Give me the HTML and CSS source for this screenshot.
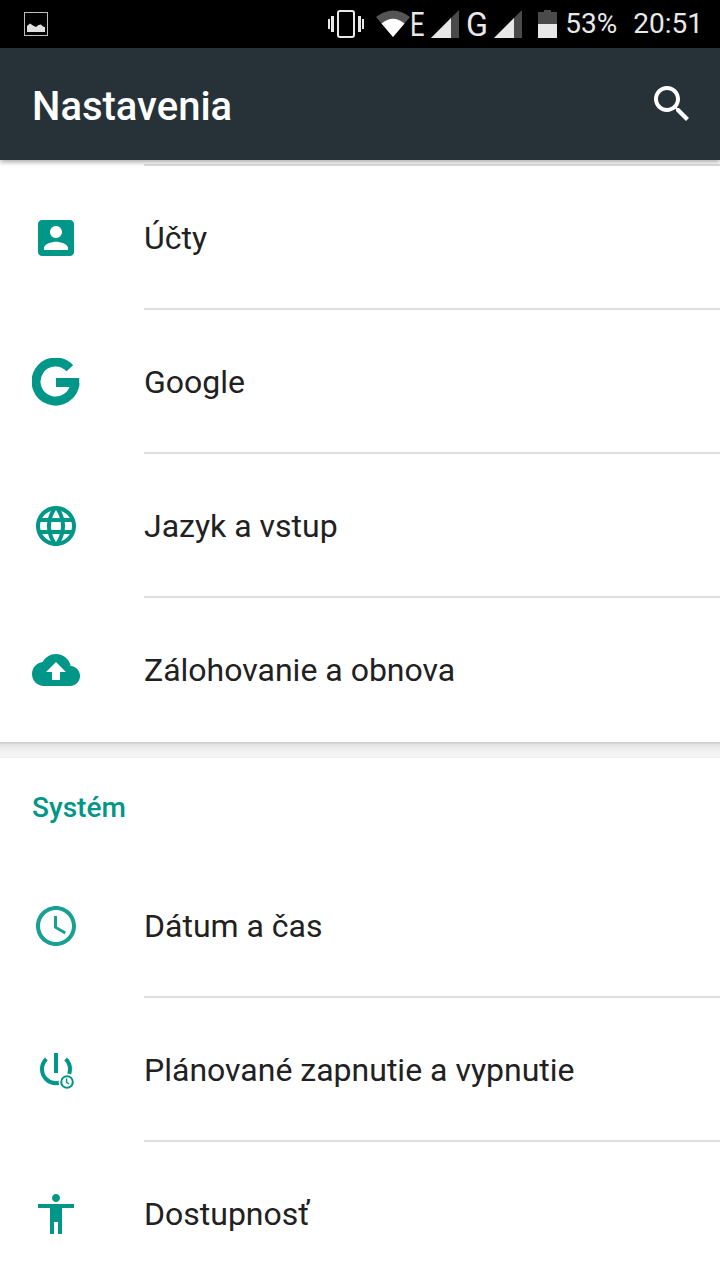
FILE: index.html
```html
<!DOCTYPE html>
<html lang="sk">
<head>
    <meta charset="UTF-8">
    <meta name="viewport" content="width=device-width, initial-scale=1.0">
    <title>Nastavenia</title>
    <link rel="stylesheet" href="styles.css">
</head>
<body>
    <div class="phone">
        <!-- Status bar -->
        <div class="status-bar">
            <svg class="status-picture" width="24" height="24" viewBox="0 0 24 24">
                <rect x="0.5" y="0.5" width="23" height="23" fill="none" stroke="#bdbdbd" stroke-width="1"/>
                <path d="M3 20V14L6 11.5L9 13.5L12 15L14.500 13L17 12.500L19 14.500L21 15V20Z" fill="#e0e0e0"/>
            </svg>
            <div class="status-right">
                <svg class="status-vibrate" width="36" height="28" viewBox="0 0 36 28">
                    <rect x="10" y="1" width="16" height="26" rx="2" fill="none" stroke="#e8e8e8" stroke-width="2"/>
                    <path d="M3 6h3v16H3zM30 6h3v16h-3zM0 9h2v10H0zM34 9h2v10h-2z" fill="#e8e8e8"/>
                </svg>
                <svg class="status-wifi" width="34" height="28" viewBox="0 0 34 28">
                    <path d="M17 27L0 7Q17 -6 34 7Z" fill="#555"/>
                    <path d="M17 27L5.500 13.500Q17 4 28.500 13.500Z" fill="#fff"/>
                </svg>
                <span class="status-letter status-letter-e">E</span>
                <svg class="status-signal" width="28" height="28" viewBox="0 0 28 28">
                    <path d="M0 28L28 0V28Z" fill="#4a4a4a"/>
                    <path d="M0 28L20 8V28Z" fill="#e8e8e8"/>
                </svg>
                <span class="status-letter status-letter-g">G</span>
                <svg class="status-signal status-signal-2" width="28" height="28" viewBox="0 0 28 28">
                    <path d="M0 28L28 0V28Z" fill="#4a4a4a"/>
                    <path d="M0 28L20 8V28Z" fill="#e8e8e8"/>
                </svg>
                <svg class="status-battery" width="19" height="28" viewBox="0 0 19 28">
                    <path d="M6 0h7v2h6v26H0V2h6z" fill="#4a4a4a"/>
                    <path d="M0 14h19v14H0z" fill="#e8e8e8"/>
                </svg>
                <span class="status-percent">53%</span>
                <span class="status-time">20:51</span>
            </div>
        </div>

        <!-- App bar -->
        <div class="app-bar">
            <h1 class="app-title">Nastavenia</h1>
            <svg class="icon" viewBox="0 0 24 24" fill="#fff">
                <path d="M15.500 14h-.79l-.28-.27C15.410 12.590 16 11.110 16 9.500 16 5.910 13.090 3 9.500 3S3 5.910 3 9.500 5.910 16 9.500 16c1.610 0 3.090-.59 4.230-1.570l.27.28v.79l5 4.990L20.490 19l-4.990-5zm-6 0C7.010 14 5 11.990 5 9.500S7.010 5 9.500 5 14 7.010 14 9.500 11.990 14 9.500 14z"/>
            </svg>
        </div>

        <div class="content">
            <div class="scrolled-edge"></div>

            <div class="settings-group">
                <div class="settings-row">
                    <svg class="icon row-icon" viewBox="0 0 24 24">
                        <path d="M3 5v14c0 1.100.89 2 2 2h14c1.100 0 2-.9 2-2V5c0-1.100-.9-2-2-2H5c-1.110 0-2 .9-2 2zm12 4c0 1.660-1.340 3-3 3s-3-1.340-3-3 1.340-3 3-3 3 1.340 3 3zm-9 8c0-2 4-3.100 6-3.100s6 1.100 6 3.100v1H6v-1z"/>
                    </svg>
                    <div class="row-label">Účty</div>
                </div>
                <div class="settings-row">
                    <svg class="icon row-icon" viewBox="0 0 24 24">
                        <path d="M18.900 5.100A9.750 9.750 0 1 0 21.500 12.500" fill="none" stroke="#009688" stroke-width="4.500"/>
                        <path d="M12 10h11.600v4.500H12z"/>
                    </svg>
                    <div class="row-label">Google</div>
                </div>
                <div class="settings-row">
                    <svg class="icon row-icon" viewBox="0 0 24 24">
                        <path d="M11.990 2C6.470 2 2 6.480 2 12s4.470 10 9.990 10C17.520 22 22 17.520 22 12S17.520 2 11.990 2zm6.930 6h-2.950c-.32-1.250-.78-2.450-1.380-3.560 1.840.63 3.370 1.910 4.330 3.560zM12 4.040c.83 1.200 1.480 2.530 1.910 3.960h-3.820c.43-1.430 1.080-2.760 1.910-3.960zM4.260 14C4.100 13.360 4 12.690 4 12s.1-1.360.26-2h3.380c-.08.66-.14 1.320-.14 2 0 .68.06 1.340.14 2H4.260zm.82 2h2.950c.32 1.250.78 2.450 1.380 3.560-1.840-.63-3.370-1.900-4.330-3.560zm2.950-8H5.080c.96-1.660 2.490-2.930 4.330-3.560C8.810 5.550 8.350 6.750 8.030 8zM12 19.960c-.83-1.200-1.480-2.530-1.910-3.960h3.820c-.43 1.430-1.080 2.760-1.910 3.960zM14.340 14H9.660c-.09-.66-.16-1.320-.16-2 0-.68.07-1.350.16-2h4.680c.09.65.16 1.320.16 2 0 .68-.07 1.340-.16 2zm.25 5.560c.6-1.110 1.060-2.310 1.380-3.560h2.950c-.96 1.650-2.490 2.930-4.330 3.560zM16.360 14c.08-.66.14-1.320.14-2 0-.68-.06-1.340-.14-2h3.380c.16.64.26 1.310.26 2s-.1 1.360-.26 2h-3.380z"/>
                    </svg>
                    <div class="row-label">Jazyk a vstup</div>
                </div>
                <div class="settings-row settings-row-last">
                    <svg class="icon row-icon" viewBox="0 0 24 24">
                        <path d="M19.350 10.040C18.670 6.590 15.640 4 12 4 9.110 4 6.600 5.640 5.350 8.040 2.340 8.360 0 10.910 0 14c0 3.310 2.690 6 6 6h13c2.760 0 5-2.240 5-5 0-2.640-2.050-4.780-4.650-4.960zM14 13v4h-4v-4H7l5-5 5 5h-3z"/>
                    </svg>
                    <div class="row-label">Zálohovanie a obnova</div>
                </div>
            </div>

            <div class="group-gap"></div>

            <div class="settings-group">
                <h2 class="group-title">Systém</h2>
                <div class="settings-row">
                    <svg class="icon row-icon row-icon-soft" viewBox="0 0 24 24">
                        <path d="M11.990 2C6.470 2 2 6.480 2 12s4.470 10 9.990 10C17.520 22 22 17.520 22 12S17.520 2 11.990 2zM12 20c-4.420 0-8-3.580-8-8s3.580-8 8-8 8 3.580 8 8-3.580 8-8 8zm.5-13H11v6l5.250 3.150.75-1.230-4.500-2.670z"/>
                    </svg>
                    <div class="row-label">Dátum a čas</div>
                </div>
                <div class="settings-row">
                    <svg class="icon row-icon" viewBox="0 0 24 24">
                        <path d="M11 3.500h2v10h-2z"/>
                        <path d="M7.200 6.500A7 7 0 1 0 16.800 6.500" fill="none" stroke="#009688" stroke-width="2"/>
                        <circle cx="17.500" cy="18" r="4.200" fill="#fff"/>
                        <circle cx="17.500" cy="18" r="2.900" fill="none" stroke="#009688" stroke-width="1"/>
                        <path d="M17.300 16.200v2l1.300.8" fill="none" stroke="#009688" stroke-width=".7"/>
                    </svg>
                    <div class="row-label">Plánované zapnutie a vypnutie</div>
                </div>
                <div class="settings-row">
                    <svg class="icon row-icon" viewBox="0 0 24 24">
                        <path d="M12 2c1.100 0 2 .9 2 2s-.9 2-2 2-2-.9-2-2 .9-2 2-2zm9 7h-6v13h-2v-6h-2v6H9V9H3V7h18v2z"/>
                    </svg>
                    <div class="row-label">Dostupnosť</div>
                </div>
            </div>
        </div>
    </div>
</body>
</html>
```

FILE: styles.css
```css
* {
    margin: 0;
    padding: 0;
    box-sizing: border-box;
}

html, body {
    height: 100%;
    overflow: hidden;
}

body {
    font-family: Roboto, "Noto Sans", sans-serif;
    background: #fff;
}

.phone {
    width: 720px;
    height: 1280px;
    overflow: hidden;
    display: flex;
    flex-direction: column;
}

/* Status bar */
.status-bar {
    height: 48px;
    flex: none;
    background: #000;
    color: #e8e8e8;
    display: flex;
    align-items: center;
    justify-content: space-between;
    padding: 0 17px 0 24px;
}

.status-right {
    display: flex;
    align-items: center;
}

.status-vibrate {
    margin-right: 12px;
}

.status-letter {
    font-size: 34px;
    font-weight: 400;
    line-height: 48px;
    display: block;
}

.status-letter-e {
    width: 18px;
    margin: 0 3px 0 0;
    transform: scaleX(0.75);
    transform-origin: left center;
}

.status-letter-g {
    width: 25px;
    margin: 0 3px 0 7px;
    transform: scaleX(0.95);
    transform-origin: left center;
}

.status-battery {
    margin-left: 16px;
}

.status-percent,
.status-time {
    font-size: 28px;
    line-height: 48px;
}

.status-percent {
    margin-left: 8px;
}

.status-time {
    margin-left: 16px;
}

/* App bar */
.app-bar {
    height: 112px;
    flex: none;
    background: #263238;
    display: flex;
    align-items: center;
    justify-content: space-between;
    padding: 0 24px 0 32px;
    position: relative;
    z-index: 2;
    box-shadow: 0 2px 5px rgba(0, 0, 0, 0.35);
}

.app-title {
    color: #fff;
    font-size: 40px;
    font-weight: 500;
    padding-top: 4px;
}

.icon {
    width: 48px;
    height: 48px;
    flex: none;
}

/* Settings list */
.content {
    flex: 1;
    min-height: 0;
}

.scrolled-edge {
    height: 6px;
    margin-left: 144px;
    border-bottom: 2px solid #dedede;
}

.settings-row {
    height: 144px;
    display: flex;
    align-items: center;
    padding-left: 32px;
    position: relative;
}

.settings-row::after {
    content: "";
    position: absolute;
    left: 144px;
    right: 0;
    bottom: 0;
    height: 2px;
    background: #dedede;
}

.settings-row-last::after {
    display: none;
}

.row-icon {
    fill: #009688;
    margin-right: 64px;
}

.row-icon-soft {
    opacity: 0.9;
}

.row-label {
    font-size: 32px;
    color: #212121;
}

.group-gap {
    height: 16px;
    background: linear-gradient(#c9c9c9 0, #e6e6e6 3px, #f3f3f3 10px, #f5f5f5 15px, #e9e9e9 16px);
}

.group-title {
    height: 96px;
    display: flex;
    align-items: center;
    padding: 2px 0 0 32px;
    font-size: 28px;
    font-weight: 500;
    color: #009688;
}
```
